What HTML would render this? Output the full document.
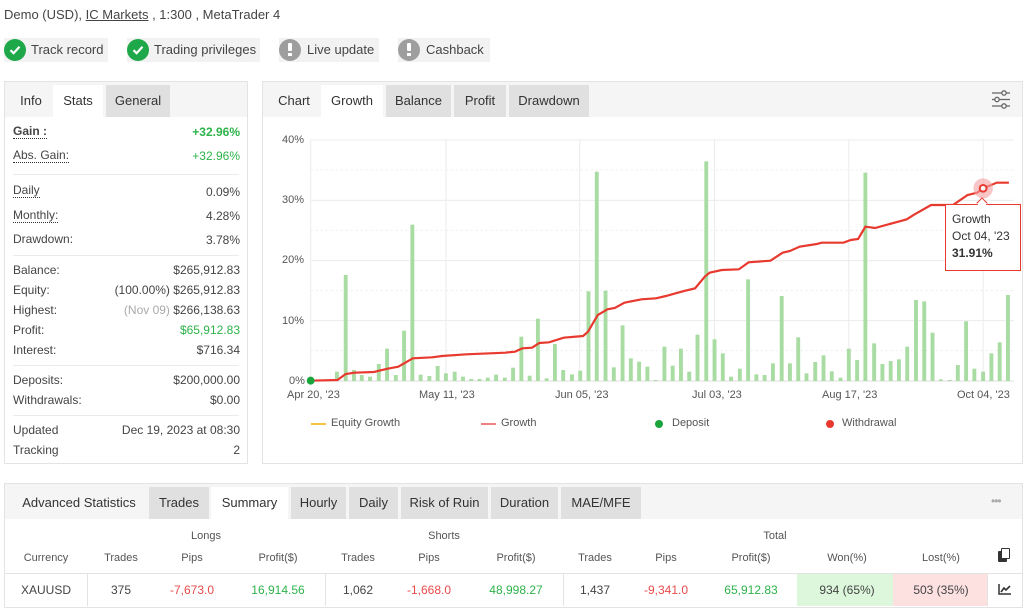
<!DOCTYPE html>
<html><head><meta charset="utf-8"><style>
*{box-sizing:border-box;margin:0;padding:0}
body{width:1024px;height:610px;background:#fff;font-family:"Liberation Sans",sans-serif;color:#333;position:relative;overflow:hidden;font-size:12px}
.a{position:absolute;white-space:nowrap}
.badge{position:absolute;top:38px;height:24px;background:#f2f2f2;font-size:13px;line-height:24px;color:#444}
.ic{position:absolute;left:0;top:1px;width:22px;height:22px;border-radius:50%}
.panel{position:absolute;border:1px solid #e3e3e3;background:#fff}
.tabbar{position:absolute;left:0;right:0;top:0;height:35px;background:#f5f5f5}
.tab{position:absolute;top:3px;height:32px;line-height:32px;text-align:center;font-size:13px;color:#333;background:#e0e0e0}
.tab.w{background:#fff}.tab.n{background:transparent}
.lbl{position:absolute;left:8px;font-size:12px;color:#444}
.val{position:absolute;right:7px;font-size:12px;color:#444;text-align:right}
.dot{border-bottom:1px dotted #333}
.hr{position:absolute;left:8px;right:8px;height:1px;background:#ebebeb}
.c{position:absolute;transform:translateX(-50%);font-size:11px;color:#555}
.d{position:absolute;transform:translateX(-50%);font-size:12px;color:#444;top:583px}
.ax{position:absolute;font-size:11px;color:#555}
.g{color:#2db34a !important}.r{color:#e84a4a !important}
</style></head><body>
<div class="a" style="left:4px;top:7px;font-size:13px;color:#444">Demo (USD), <span style="text-decoration:underline">IC Markets</span> , 1:300 , MetaTrader 4</div>

<div class="badge" style="left:4px;width:104px;padding-left:27px"><div class="ic" style="background:#1fa84a"></div><svg class="a" style="left:5px;top:6px" width="12" height="12" viewBox="0 0 12 12"><path d="M1.5 6.2 L4.6 9.2 L10.5 2.8" stroke="#fff" stroke-width="2.2" fill="none"/></svg>Track record</div>
<div class="badge" style="left:127px;width:133px;padding-left:27px"><div class="ic" style="background:#1fa84a"></div><svg class="a" style="left:5px;top:6px" width="12" height="12" viewBox="0 0 12 12"><path d="M1.5 6.2 L4.6 9.2 L10.5 2.8" stroke="#fff" stroke-width="2.2" fill="none"/></svg>Trading privileges</div>
<div class="badge" style="left:279px;width:100px;padding-left:28px"><div class="ic" style="background:#9e9e9e"></div><div class="a" style="left:9px;top:5px;width:4px;height:8px;background:#fff;border-radius:1px"></div><div class="a" style="left:9px;top:15px;width:4px;height:3px;background:#fff"></div>Live update</div>
<div class="badge" style="left:398px;width:92px;padding-left:28px"><div class="ic" style="background:#9e9e9e"></div><div class="a" style="left:9px;top:5px;width:4px;height:8px;background:#fff;border-radius:1px"></div><div class="a" style="left:9px;top:15px;width:4px;height:3px;background:#fff"></div>Cashback</div>

<!-- left panel -->
<div class="panel" style="left:4px;top:81px;width:244px;height:383px">
<div class="tabbar"></div>
<div class="tab n" style="left:4px;width:44px">Info</div>
<div class="tab w" style="left:48px;width:50px">Stats</div>
<div class="tab" style="left:101px;width:64px">General</div>
<div class="lbl" style="top:42px;font-weight:bold"><span class="dot">Gain :</span></div><div class="val g" style="top:43px;font-weight:bold">+32.96%</div>
<div class="lbl" style="top:66px"><span class="dot">Abs. Gain:</span></div><div class="val g" style="top:67px">+32.96%</div>
<div class="hr" style="top:92px"></div>
<div class="lbl" style="top:101px"><span class="dot">Daily</span></div><div class="val" style="top:103px">0.09%</div>
<div class="lbl" style="top:126px"><span class="dot">Monthly:</span></div><div class="val" style="top:127px">4.28%</div>
<div class="lbl" style="top:150px">Drawdown:</div><div class="val" style="top:151px">3.78%</div>
<div class="hr" style="top:173px"></div>
<div class="lbl" style="top:181px">Balance:</div><div class="val" style="top:181px">$265,912.83</div>
<div class="lbl" style="top:201px">Equity:</div><div class="val" style="top:201px">(100.00%) $265,912.83</div>
<div class="lbl" style="top:221px">Highest:</div><div class="val" style="top:221px"><span style="color:#aaa">(Nov 09)</span> $266,138.63</div>
<div class="lbl" style="top:241px">Profit:</div><div class="val g" style="top:241px">$65,912.83</div>
<div class="lbl" style="top:261px">Interest:</div><div class="val" style="top:261px">$716.34</div>
<div class="hr" style="top:283px"></div>
<div class="lbl" style="top:291px">Deposits:</div><div class="val" style="top:291px">$200,000.00</div>
<div class="lbl" style="top:311px">Withdrawals:</div><div class="val" style="top:311px">$0.00</div>
<div class="hr" style="top:333px"></div>
<div class="lbl" style="top:341px">Updated</div><div class="val" style="top:341px">Dec 19, 2023 at 08:30</div>
<div class="lbl" style="top:361px">Tracking</div><div class="val" style="top:361px">2</div>
</div>

<!-- chart panel -->
<div class="panel" style="left:262px;top:81px;width:761px;height:383px">
<div class="tabbar"></div>
<div class="tab n" style="left:4px;width:54px">Chart</div>
<div class="tab w" style="left:58px;width:62px">Growth</div>
<div class="tab" style="left:123px;width:65px">Balance</div>
<div class="tab" style="left:191px;width:52px">Profit</div>
<div class="tab" style="left:246px;width:80px">Drawdown</div>
<svg class="a" style="left:728px;top:8px" width="20" height="19" viewBox="0 0 20 19"><g stroke="#666" stroke-width="1.3" fill="#f5f5f5"><line x1="1" y1="3" x2="19" y2="3"/><line x1="1" y1="9.5" x2="19" y2="9.5"/><line x1="1" y1="16" x2="19" y2="16"/><circle cx="13" cy="3" r="2.2"/><circle cx="6" cy="9.5" r="2.2"/><circle cx="13" cy="16" r="2.2"/></g></svg>
</div>
<div class="ax" style="left:282px;top:134px">40%</div>
<div class="ax" style="left:282px;top:194px">30%</div>
<div class="ax" style="left:282px;top:254px">20%</div>
<div class="ax" style="left:282px;top:315px">10%</div>
<div class="ax" style="left:289px;top:375px">0%</div>
<div class="ax" style="left:287px;top:389px">Apr 20, '23</div>
<div class="ax" style="left:419px;top:389px">May 11, '23</div>
<div class="ax" style="left:555px;top:389px">Jun 05, '23</div>
<div class="ax" style="left:692px;top:389px">Jul 03, '23</div>
<div class="ax" style="left:822px;top:389px">Aug 17, '23</div>
<div class="ax" style="left:957px;top:389px">Oct 04, '23</div>
<svg class="a" style="left:262px;top:80px" width="762" height="390" viewBox="0 0 1566 1170" preserveAspectRatio="none">
<g stroke="#ececec" stroke-width="1">
<line x1="100" y1="180" x2="1545" y2="180" vector-effect="non-scaling-stroke"/>
<line x1="100" y1="361" x2="1545" y2="361" vector-effect="non-scaling-stroke"/>
<line x1="100" y1="542" x2="1545" y2="542" vector-effect="non-scaling-stroke"/>
<line x1="100" y1="722" x2="1545" y2="722" vector-effect="non-scaling-stroke"/>
<line x1="100" y1="903" x2="1545" y2="903" stroke="#ddd" vector-effect="non-scaling-stroke"/>
<g stroke-dasharray="2,3"><line x1="100" y1="270" x2="1545" y2="270" vector-effect="non-scaling-stroke"/><line x1="100" y1="451" x2="1545" y2="451" vector-effect="non-scaling-stroke"/><line x1="100" y1="632" x2="1545" y2="632" vector-effect="non-scaling-stroke"/><line x1="100" y1="812" x2="1545" y2="812" vector-effect="non-scaling-stroke"/></g>
<line x1="100" y1="180" x2="100" y2="903" vector-effect="non-scaling-stroke"/>
<line x1="378" y1="180" x2="378" y2="903" vector-effect="non-scaling-stroke"/>
<line x1="653" y1="180" x2="653" y2="903" vector-effect="non-scaling-stroke"/>
<line x1="930" y1="180" x2="930" y2="903" vector-effect="non-scaling-stroke"/>
<line x1="1206" y1="180" x2="1206" y2="903" vector-effect="non-scaling-stroke"/>
<line x1="1482" y1="180" x2="1482" y2="903" vector-effect="non-scaling-stroke"/>
</g>
<g fill="#a9dca2" id="bars"></g>
<path d="M100 902 L155 900 L172 882 L190 878 L230 876 L258 866 L280 860 L310 835 L350 832 L370 828 L420 823 L500 818 L520 815 L535 805 L555 803 L570 789 L590 787 L620 773 L660 768 L670 755 L690 705 L710 688 L725 684 L745 668 L780 658 L810 655 L830 648 L850 640 L870 632 L890 625 L910 590 L920 578 L945 570 L980 568 L1000 547 L1045 542 L1070 518 L1085 513 L1105 500 L1140 492 L1150 488 L1195 488 L1210 480 L1225 477 L1240 440 L1260 444 L1300 428 L1325 418 L1340 404 L1375 375 L1420 375 L1450 345 L1470 338 L1482 325 L1510 308 L1535 308" fill="none" stroke="#e8392f" stroke-width="2.2" vector-effect="non-scaling-stroke"/>
<ellipse cx="1482" cy="325" rx="20" ry="30" fill="#f4a0a0" opacity="0.6"/>
<ellipse cx="1482" cy="325" rx="7" ry="10" fill="#fff" stroke="#e8392f" stroke-width="2" vector-effect="non-scaling-stroke"/>
<ellipse cx="100" cy="902" rx="8" ry="12" fill="#1aa53c"/>
</svg>
<div class="a" style="left:945px;top:204px;width:76px;height:67px;border:1px solid #e8392f;background:#fff;padding:6px 0 0 6px;font-size:12px;line-height:17px;color:#333">Growth<br>Oct 04, '23<br><b>31.91%</b></div>
<div class="a" style="left:978px;top:199px;width:8px;height:8px;background:#fff;border-left:1px solid #e8392f;border-top:1px solid #e8392f;transform:rotate(45deg)"></div>
<div class="a" style="left:311px;top:423px;width:15px;height:2px;background:#f5c542"></div><div class="ax" style="left:331px;top:417px">Equity Growth</div>
<div class="a" style="left:481px;top:423px;width:15px;height:2px;background:#f08080"></div><div class="ax" style="left:501px;top:417px">Growth</div>
<div class="a" style="left:655px;top:420px;width:8px;height:8px;border-radius:50%;background:#1aa53c"></div><div class="ax" style="left:672px;top:417px">Deposit</div>
<div class="a" style="left:826px;top:420px;width:8px;height:8px;border-radius:50%;background:#e8392f"></div><div class="ax" style="left:842px;top:417px">Withdrawal</div>

<!-- bottom panel -->
<div class="panel" style="left:4px;top:483px;width:1019px;height:125px">
<div class="tabbar" style="height:35px"></div>
<div class="tab n" style="left:4px;width:140px;font-size:13px">Advanced Statistics</div>
<div class="tab" style="left:144px;width:60px">Trades</div>
<div class="tab w" style="left:206px;width:77px">Summary</div>
<div class="tab" style="left:286px;width:55px">Hourly</div>
<div class="tab" style="left:344px;width:49px">Daily</div>
<div class="tab" style="left:396px;width:87px">Risk of Ruin</div>
<div class="tab" style="left:486px;width:67px">Duration</div>
<div class="tab" style="left:556px;width:80px">MAE/MFE</div>
<div class="a" style="left:986px;top:10px;color:#aaa;font-size:12px;letter-spacing:-1px">•••</div>
</div>
<div class="c" style="left:206px;top:530px">Longs</div>
<div class="c" style="left:444px;top:530px">Shorts</div>
<div class="c" style="left:775px;top:530px">Total</div>
<div class="c" style="left:46px;top:552px">Currency</div>
<div class="c" style="left:121px;top:552px">Trades</div>
<div class="c" style="left:192px;top:552px">Pips</div>
<div class="c" style="left:278px;top:552px">Profit($)</div>
<div class="c" style="left:358px;top:552px">Trades</div>
<div class="c" style="left:429px;top:552px">Pips</div>
<div class="c" style="left:516px;top:552px">Profit($)</div>
<div class="c" style="left:595px;top:552px">Trades</div>
<div class="c" style="left:666px;top:552px">Pips</div>
<div class="c" style="left:751px;top:552px">Profit($)</div>
<div class="c" style="left:847px;top:552px">Won(%)</div>
<div class="c" style="left:941px;top:552px">Lost(%)</div>
<div class="a" style="left:998px;top:551px;width:9px;height:11px;background:#333;border-radius:1px"></div>
<div class="a" style="left:1001px;top:548px;width:9px;height:11px;border:1.5px solid #333;background:#fff;border-radius:1px"></div>
<div class="a" style="left:5px;top:573px;width:1017px;height:1px;background:#e3e3e3"></div>
<div class="a" style="left:797px;top:574px;width:96px;height:32px;background:#dcf7dc"></div>
<div class="a" style="left:893px;top:574px;width:94px;height:32px;background:#fde0e0"></div>
<div class="a" style="left:87px;top:574px;width:1px;height:32px;background:#e3e3e3"></div>
<div class="a" style="left:325px;top:574px;width:1px;height:32px;background:#e3e3e3"></div>
<div class="a" style="left:563px;top:574px;width:1px;height:32px;background:#e3e3e3"></div>
<div class="a" style="left:987px;top:574px;width:1px;height:32px;background:#e3e3e3"></div>
<div class="d" style="left:46px">XAUUSD</div>
<div class="d" style="left:121px">375</div>
<div class="d r" style="left:192px">-7,673.0</div>
<div class="d g" style="left:278px">16,914.56</div>
<div class="d" style="left:358px">1,062</div>
<div class="d r" style="left:429px">-1,668.0</div>
<div class="d g" style="left:516px">48,998.27</div>
<div class="d" style="left:595px">1,437</div>
<div class="d r" style="left:666px">-9,341.0</div>
<div class="d g" style="left:751px">65,912.83</div>
<div class="d" style="left:847px">934 (65%)</div>
<div class="d" style="left:941px">503 (35%)</div>
<svg class="a" style="left:998px;top:584px" width="13" height="11" viewBox="0 0 13 11"><path d="M1 0 V10 H13" stroke="#333" stroke-width="1.5" fill="none"/><path d="M3 8 L6 4 L8 6 L12 2" stroke="#333" stroke-width="1.6" fill="none"/></svg>
<script>
var b=[[154,875],[172,585],[189,870],[205,885],[222,890],[240,852],[257,806],[275,885],[292,752],[309,434],[326,884],[344,888],[361,858],[378,880],[396,875],[413,890],[430,897],[447,897],[464,893],[481,884],[499,893],[516,863],[533,770],[550,887],[567,716],[585,895],[602,792],[619,870],[637,883],[654,872],[671,634],[688,275],[706,632],[723,862],[741,736],[758,835],[775,845],[792,860],[809,900],[827,800],[844,857],[861,806],[878,875],[895,764],[913,244],[930,778],[947,820],[964,890],[982,866],[999,598],[1016,883],[1033,885],[1050,850],[1068,648],[1085,850],[1102,772],[1119,880],[1137,846],[1154,826],[1171,874],[1189,893],[1206,806],[1223,840],[1240,278],[1258,790],[1275,852],[1292,843],[1309,838],[1326,800],[1344,660],[1361,664],[1378,758],[1395,898],[1413,900],[1430,855],[1447,724],[1464,866],[1482,875],[1499,820],[1516,787],[1533,645]];
var g=document.getElementById('bars'),s='';
b.forEach(function(p){s+='<rect x="'+(p[0]-4)+'" y="'+p[1]+'" width="8" height="'+(903-p[1])+'"/>';});
g.innerHTML=s;
</script>
</body></html>
